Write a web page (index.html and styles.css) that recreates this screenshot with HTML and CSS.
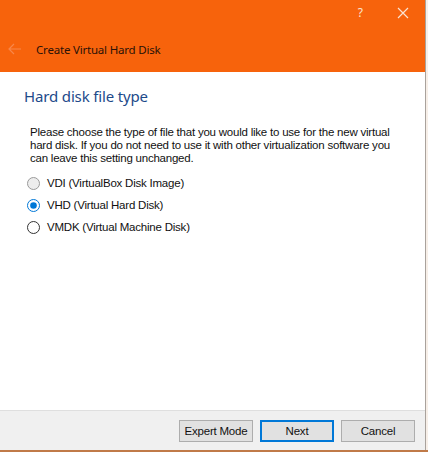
FILE: index.html
```html
<!DOCTYPE html>
<html>
<head>
<meta charset="utf-8">
<link rel="stylesheet" href="styles.css">
</head>
<body>
<div class="window">
  <div class="main">
    <header class="titlebar">
      <div class="controls">
        <span class="help">?</span>
        <svg class="close" width="12" height="12" viewBox="0 0 12 12"><path d="M1 1 L11 11 M11 1 L1 11" stroke="#fbe3d2" stroke-width="1.2" fill="none"/></svg>
      </div>
      <div class="wizard-row">
        <svg class="back" width="14" height="12" viewBox="0 0 14 12"><path d="M6 1 L1 6 L6 11 M1 6 H13" stroke="#f8874a" stroke-width="1.2" fill="none"/></svg>
        <span class="wizard-title">Create Virtual Hard Disk</span>
      </div>
    </header>
    <section class="content">
      <h1 class="heading">Hard disk file type</h1>
      <p class="desc">Please choose the type of file that you would like to use for the new virtual<br>hard disk. If you do not need to use it with other virtualization software you<br>can leave this setting unchanged.</p>
      <div class="options">
        <label class="option">
          <svg class="radio" width="13" height="13" viewBox="0 0 13 13"><circle cx="6.5" cy="6.5" r="6" fill="#ededed" stroke="#9a9a9a" stroke-width="1"/></svg>
          <span>VDI (VirtualBox Disk Image)</span>
        </label>
        <label class="option">
          <svg class="radio" width="13" height="13" viewBox="0 0 13 13"><circle cx="6.5" cy="6.5" r="6" fill="#fff" stroke="#0078d7" stroke-width="1"/><circle cx="6.5" cy="6.5" r="3.3" fill="#0078d7"/></svg>
          <span>VHD (Virtual Hard Disk)</span>
        </label>
        <label class="option">
          <svg class="radio" width="13" height="13" viewBox="0 0 13 13"><circle cx="6.5" cy="6.5" r="6" fill="#fff" stroke="#333" stroke-width="1"/></svg>
          <span>VMDK (Virtual Machine Disk)</span>
        </label>
      </div>
    </section>
    <footer class="footer">
      <button class="btn">Expert Mode</button>
      <button class="btn btn-default">Next</button>
      <button class="btn">Cancel</button>
    </footer>
  </div>
  <div class="edge"></div>
</div>
</body>
</html>
```

FILE: styles.css
```css
html, body {
  margin: 0;
  padding: 0;
  width: 428px;
  height: 452px;
  overflow: hidden;
  background: #f6ece4;
  font-family: "Liberation Sans", Arial, sans-serif;
}

.window {
  display: flex;
  width: 428px;
  height: 450px;
  border-bottom: 2px solid #c07a48;
}

.main {
  width: 425px;
  display: flex;
  flex-direction: column;
  border-right: 1px solid #a9a29c;
  background: #fff;
}

.edge {
  flex: 1;
  background: #f7efe8;
}

.titlebar {
  height: 72px;
  background: #f7630c;
  display: flex;
  flex-direction: column;
}

.controls {
  height: 30px;
  display: flex;
  justify-content: flex-end;
  align-items: center;
  gap: 34px;
  padding-right: 16px;
}

.help {
  color: #fbe3d2;
  font-family: "Noto Sans", sans-serif;
  font-size: 12px;
  line-height: 12px;
  margin-top: -4px;
}

.close {
  margin-top: -4px;
}

.wizard-row {
  display: flex;
  align-items: center;
  height: 42px;
  padding-left: 8px;
  margin-top: -2px;
}

.back {
  margin-right: 14px;
}

.wizard-title {
  font-family: "Noto Sans", sans-serif;
  font-size: 11.5px;
  letter-spacing: -0.2px;
  color: #2a1208;
}

.content {
  flex: 1;
  padding: 0 24px;
}

.heading {
  margin: 13px 0 0 0;
  font-family: "Noto Sans", sans-serif;
  font-weight: normal;
  font-size: 15px;
  letter-spacing: -0.15px;
  line-height: 22px;
  color: #1d4a8a;
}

.desc {
  margin: 19px 0 0 6px;
  font-size: 11.5px;
  letter-spacing: -0.22px;
  line-height: 13px;
  color: #111;
  white-space: nowrap;
}

.options {
  display: flex;
  flex-direction: column;
  gap: 9px;
  margin: 12px 0 0 3px;
}

.option {
  display: flex;
  align-items: center;
  gap: 7px;
  font-size: 11.5px;
  line-height: 13px;
  letter-spacing: -0.22px;
  color: #111;
  height: 13px;
}

.radio {
  display: block;
  flex-shrink: 0;
}

.footer {
  height: 39px;
  background: #f0f0f0;
  border-top: 1px solid #dfdfdf;
  display: flex;
  justify-content: flex-end;
  align-items: center;
  gap: 7px;
  padding-right: 10px;
}

.btn {
  width: 74px;
  height: 22px;
  font-family: inherit;
  font-size: 11.5px;
  letter-spacing: -0.22px;
  color: #111;
  background: #e1e1e1;
  border: 1px solid #adadad;
  padding: 0;
  margin: 0;
}

.btn-default {
  border: 2px solid #0078d7;
}
```
